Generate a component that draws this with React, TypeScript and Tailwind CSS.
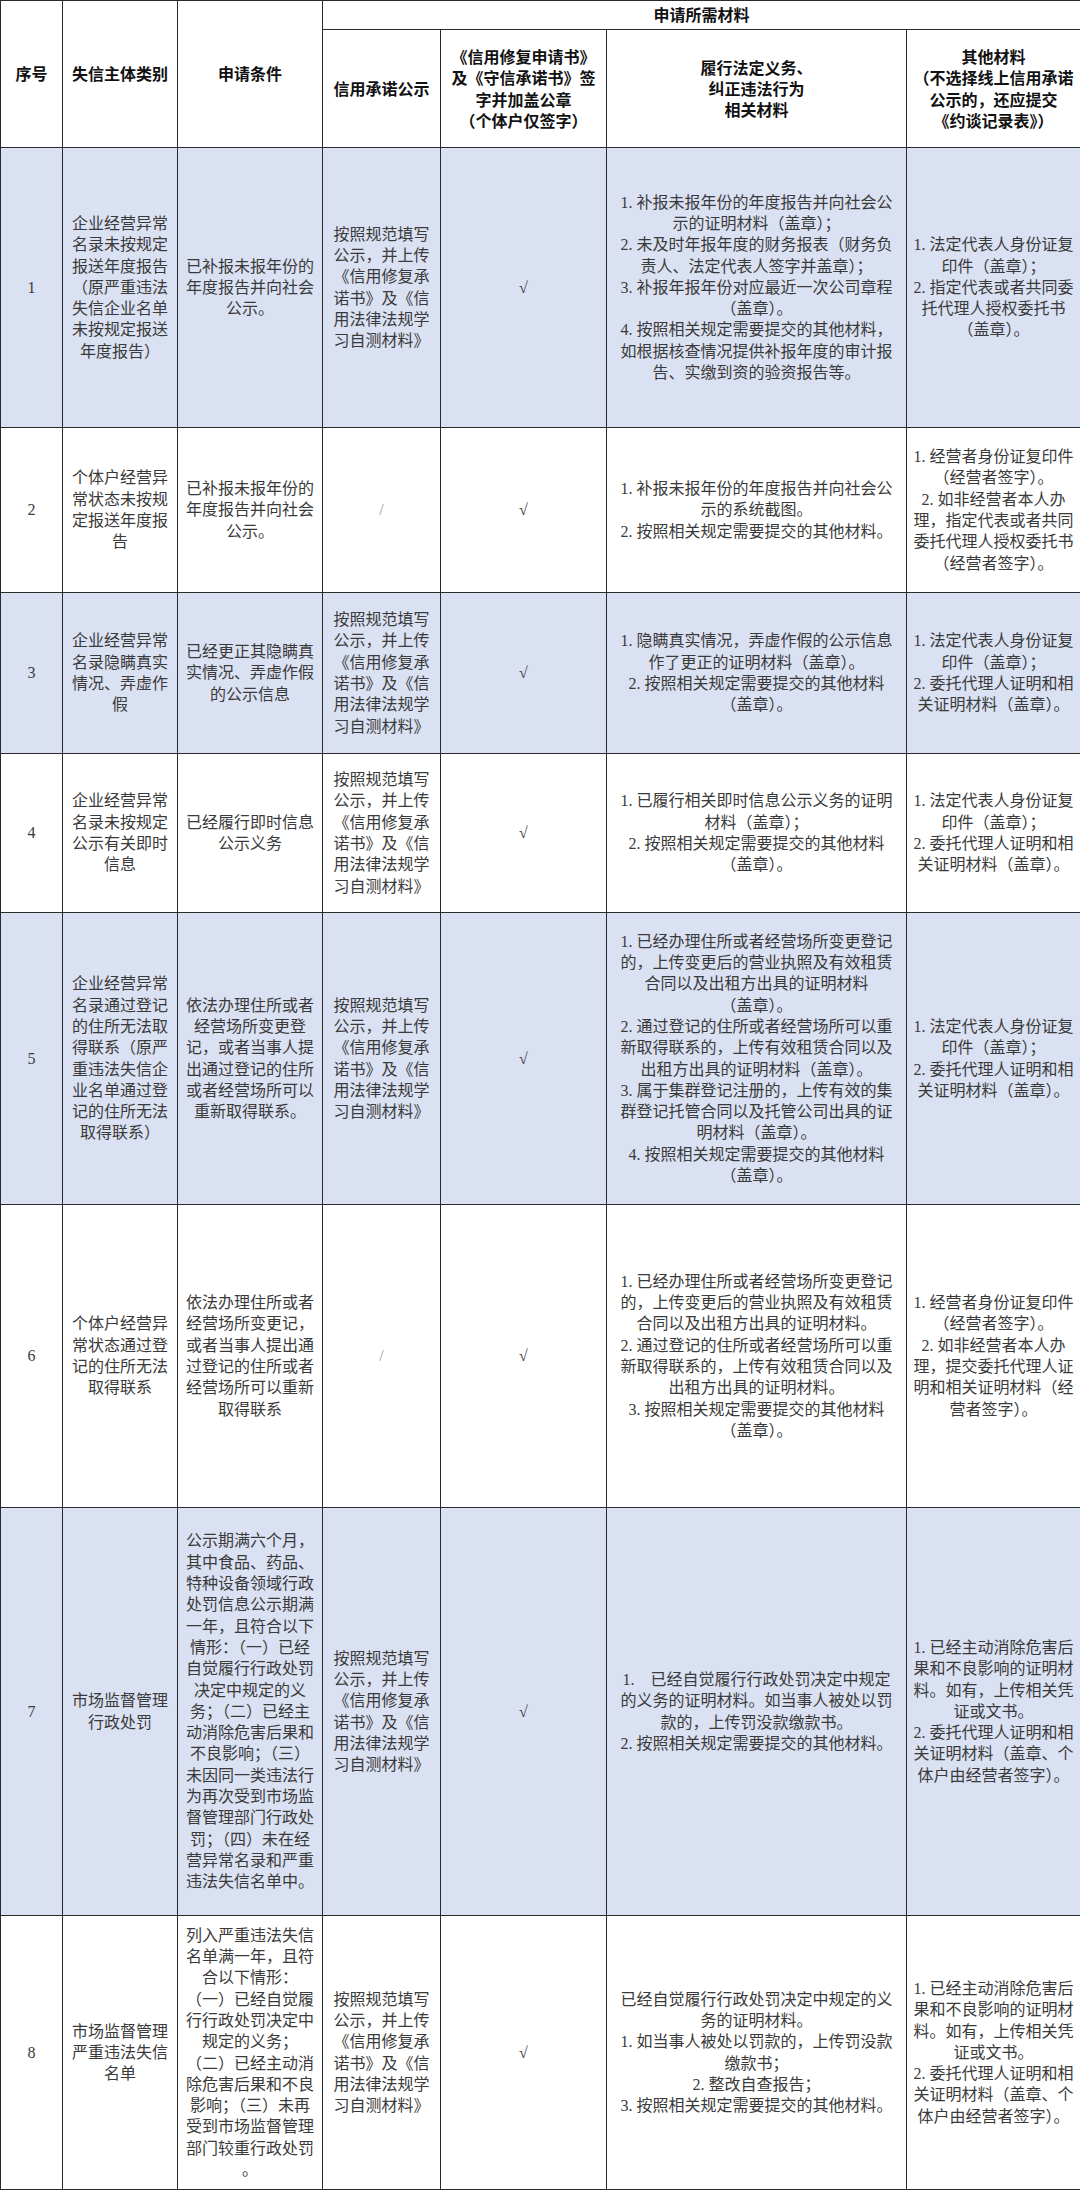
import React from 'react';

interface RowData {
  no: string;
  cat: string[];
  cond: string[];
  pub: boolean;
  duty: string[];
  other: string[];
  h: string;
  blue: boolean;
}

const PUB = ['按照规范填写', '公示，并上传', '《信用修复承', '诺书》及《信', '用法律法规学', '习自测材料》'];

const rows: RowData[] = [
  {
    no: '1',
    h: 'h-[280px]',
    blue: true,
    pub: true,
    cat: ['企业经营异常', '名录未按规定', '报送年度报告', '（原严重违法', '失信企业名单', '未按规定报送', '年度报告）'],
    cond: ['已补报未报年份的', '年度报告并向社会', '公示。'],
    duty: [
      '1. 补报未报年份的年度报告并向社会公',
      '示的证明材料（盖章）；',
      '2. 未及时年报年度的财务报表（财务负',
      '责人、法定代表人签字并盖章）；',
      '3. 补报年报年份对应最近一次公司章程',
      '（盖章）。',
      '4. 按照相关规定需要提交的其他材料，',
      '如根据核查情况提供补报年度的审计报',
      '告、实缴到资的验资报告等。',
    ],
    other: ['1. 法定代表人身份证复', '印件（盖章）；', '2. 指定代表或者共同委', '托代理人授权委托书', '（盖章）。'],
  },
  {
    no: '2',
    h: 'h-[165px]',
    blue: false,
    pub: false,
    cat: ['个体户经营异', '常状态未按规', '定报送年度报', '告'],
    cond: ['已补报未报年份的', '年度报告并向社会', '公示。'],
    duty: ['1. 补报未报年份的年度报告并向社会公', '示的系统截图。', '2. 按照相关规定需要提交的其他材料。'],
    other: ['1. 经营者身份证复印件', '（经营者签字）。', '2. 如非经营者本人办', '理，指定代表或者共同', '委托代理人授权委托书', '（经营者签字）。'],
  },
  {
    no: '3',
    h: 'h-[161px]',
    blue: true,
    pub: true,
    cat: ['企业经营异常', '名录隐瞒真实', '情况、弄虚作', '假'],
    cond: ['已经更正其隐瞒真', '实情况、弄虚作假', '的公示信息'],
    duty: ['1. 隐瞒真实情况，弄虚作假的公示信息', '作了更正的证明材料（盖章）。', '2. 按照相关规定需要提交的其他材料', '（盖章）。'],
    other: ['1. 法定代表人身份证复', '印件（盖章）；', '2. 委托代理人证明和相', '关证明材料（盖章）。'],
  },
  {
    no: '4',
    h: 'h-[159px]',
    blue: false,
    pub: true,
    cat: ['企业经营异常', '名录未按规定', '公示有关即时', '信息'],
    cond: ['已经履行即时信息', '公示义务'],
    duty: ['1. 已履行相关即时信息公示义务的证明', '材料（盖章）；', '2. 按照相关规定需要提交的其他材料', '（盖章）。'],
    other: ['1. 法定代表人身份证复', '印件（盖章）；', '2. 委托代理人证明和相', '关证明材料（盖章）。'],
  },
  {
    no: '5',
    h: 'h-[292px]',
    blue: true,
    pub: true,
    cat: ['企业经营异常', '名录通过登记', '的住所无法取', '得联系（原严', '重违法失信企', '业名单通过登', '记的住所无法', '取得联系）'],
    cond: ['依法办理住所或者', '经营场所变更登', '记，或者当事人提', '出通过登记的住所', '或者经营场所可以', '重新取得联系。'],
    duty: [
      '1. 已经办理住所或者经营场所变更登记',
      '的，上传变更后的营业执照及有效租赁',
      '合同以及出租方出具的证明材料',
      '（盖章）。',
      '2. 通过登记的住所或者经营场所可以重',
      '新取得联系的，上传有效租赁合同以及',
      '出租方出具的证明材料（盖章）。',
      '3. 属于集群登记注册的，上传有效的集',
      '群登记托管合同以及托管公司出具的证',
      '明材料（盖章）。',
      '4. 按照相关规定需要提交的其他材料',
      '（盖章）。',
    ],
    other: ['1. 法定代表人身份证复', '印件（盖章）；', '2. 委托代理人证明和相', '关证明材料（盖章）。'],
  },
  {
    no: '6',
    h: 'h-[303px]',
    blue: false,
    pub: false,
    cat: ['个体户经营异', '常状态通过登', '记的住所无法', '取得联系'],
    cond: ['依法办理住所或者', '经营场所变更记，', '或者当事人提出通', '过登记的住所或者', '经营场所可以重新', '取得联系'],
    duty: [
      '1. 已经办理住所或者经营场所变更登记',
      '的，上传变更后的营业执照及有效租赁',
      '合同以及出租方出具的证明材料。',
      '2. 通过登记的住所或者经营场所可以重',
      '新取得联系的，上传有效租赁合同以及',
      '出租方出具的证明材料。',
      '3. 按照相关规定需要提交的其他材料',
      '（盖章）。',
    ],
    other: ['1. 经营者身份证复印件', '（经营者签字）。', '2. 如非经营者本人办', '理，提交委托代理人证', '明和相关证明材料（经', '营者签字）。'],
  },
  {
    no: '7',
    h: 'h-[408px]',
    blue: true,
    pub: true,
    cat: ['市场监督管理', '行政处罚'],
    cond: [
      '公示期满六个月，',
      '其中食品、药品、',
      '特种设备领域行政',
      '处罚信息公示期满',
      '一年，且符合以下',
      '情形：（一）已经',
      '自觉履行行政处罚',
      '决定中规定的义',
      '务；（二）已经主',
      '动消除危害后果和',
      '不良影响；（三）',
      '未因同一类违法行',
      '为再次受到市场监',
      '督管理部门行政处',
      '罚；（四）未在经',
      '营异常名录和严重',
      '违法失信名单中。',
    ],
    duty: [
      '1.    已经自觉履行行政处罚决定中规定',
      '的义务的证明材料。如当事人被处以罚',
      '款的，上传罚没款缴款书。',
      '2. 按照相关规定需要提交的其他材料。',
    ],
    other: ['1. 已经主动消除危害后', '果和不良影响的证明材', '料。如有，上传相关凭', '证或文书。', '2. 委托代理人证明和相', '关证明材料（盖章、个', '体户由经营者签字）。'],
  },
  {
    no: '8',
    h: 'h-[274px]',
    blue: false,
    pub: true,
    cat: ['市场监督管理', '严重违法失信', '名单'],
    cond: [
      '列入严重违法失信',
      '名单满一年，且符',
      '合以下情形：',
      '（一）已经自觉履',
      '行行政处罚决定中',
      '规定的义务；',
      '（二）已经主动消',
      '除危害后果和不良',
      '影响；（三）未再',
      '受到市场监督管理',
      '部门较重行政处罚',
      '。',
    ],
    duty: [
      '已经自觉履行行政处罚决定中规定的义',
      '务的证明材料。',
      '1. 如当事人被处以罚款的，上传罚没款',
      '缴款书；',
      '2. 整改自查报告；',
      '3. 按照相关规定需要提交的其他材料。',
    ],
    other: ['1. 已经主动消除危害后', '果和不良影响的证明材', '料。如有，上传相关凭', '证或文书。', '2. 委托代理人证明和相', '关证明材料（盖章、个', '体户由经营者签字）。'],
  },
];

const Lines: React.FC<{ lines: string[] }> = ({ lines }) => (
  <>
    {lines.map((l, i) => (
      <div key={i} className="whitespace-pre">
        {l}
      </div>
    ))}
  </>
);

const td = 'border border-[#2a2a2a] text-center align-middle px-0.5';
const th = 'border border-[#2a2a2a] text-center align-middle font-bold text-[#111] px-0.5';

const App: React.FC = () => {
  return (
    <div className="w-[1080px] bg-white font-['Liberation_Serif','Noto_Sans_CJK_SC',serif] text-[16px] leading-[21.3px] text-[#3a3a3a]">
      <table className="w-[1080px] table-fixed border-collapse">
        <colgroup>
          <col className="w-[62px]" />
          <col className="w-[115px]" />
          <col className="w-[145px]" />
          <col className="w-[118px]" />
          <col className="w-[166px]" />
          <col className="w-[300px]" />
          <col className="w-[174px]" />
        </colgroup>
        <thead className="font-['Noto_Sans_CJK_SC',sans-serif]">
          <tr className="h-[29px]">
            <th rowSpan={2} className={th}>序号</th>
            <th rowSpan={2} className={th}>失信主体类别</th>
            <th rowSpan={2} className={th}>申请条件</th>
            <th colSpan={4} className={th}>申请所需材料</th>
          </tr>
          <tr className="h-[118px]">
            <th className={th}>信用承诺公示</th>
            <th className={th}>
              <Lines lines={['《信用修复申请书》', '及《守信承诺书》签', '字并加盖公章', '（个体户仅签字）']} />
            </th>
            <th className={th}>
              <Lines lines={['履行法定义务、', '纠正违法行为', '相关材料']} />
            </th>
            <th className={th}>
              <Lines lines={['其他材料', '（不选择线上信用承诺', '公示的，还应提交', '《约谈记录表》）']} />
            </th>
          </tr>
        </thead>
        <tbody>
          {rows.map((r) => (
            <tr key={r.no} className={`${r.h} ${r.blue ? 'bg-[#dae1f2]' : 'bg-white'}`}>
              <td className={td}>{r.no}</td>
              <td className={td}>
                <Lines lines={r.cat} />
              </td>
              <td className={td}>
                <Lines lines={r.cond} />
              </td>
              <td className={td}>
                {r.pub ? <Lines lines={PUB} /> : <span className="text-[#9a9a9a]">/</span>}
              </td>
              <td className={td}>√</td>
              <td className={td}>
                <Lines lines={r.duty} />
              </td>
              <td className={td}>
                <Lines lines={r.other} />
              </td>
            </tr>
          ))}
        </tbody>
      </table>
    </div>
  );
};

export default App;
